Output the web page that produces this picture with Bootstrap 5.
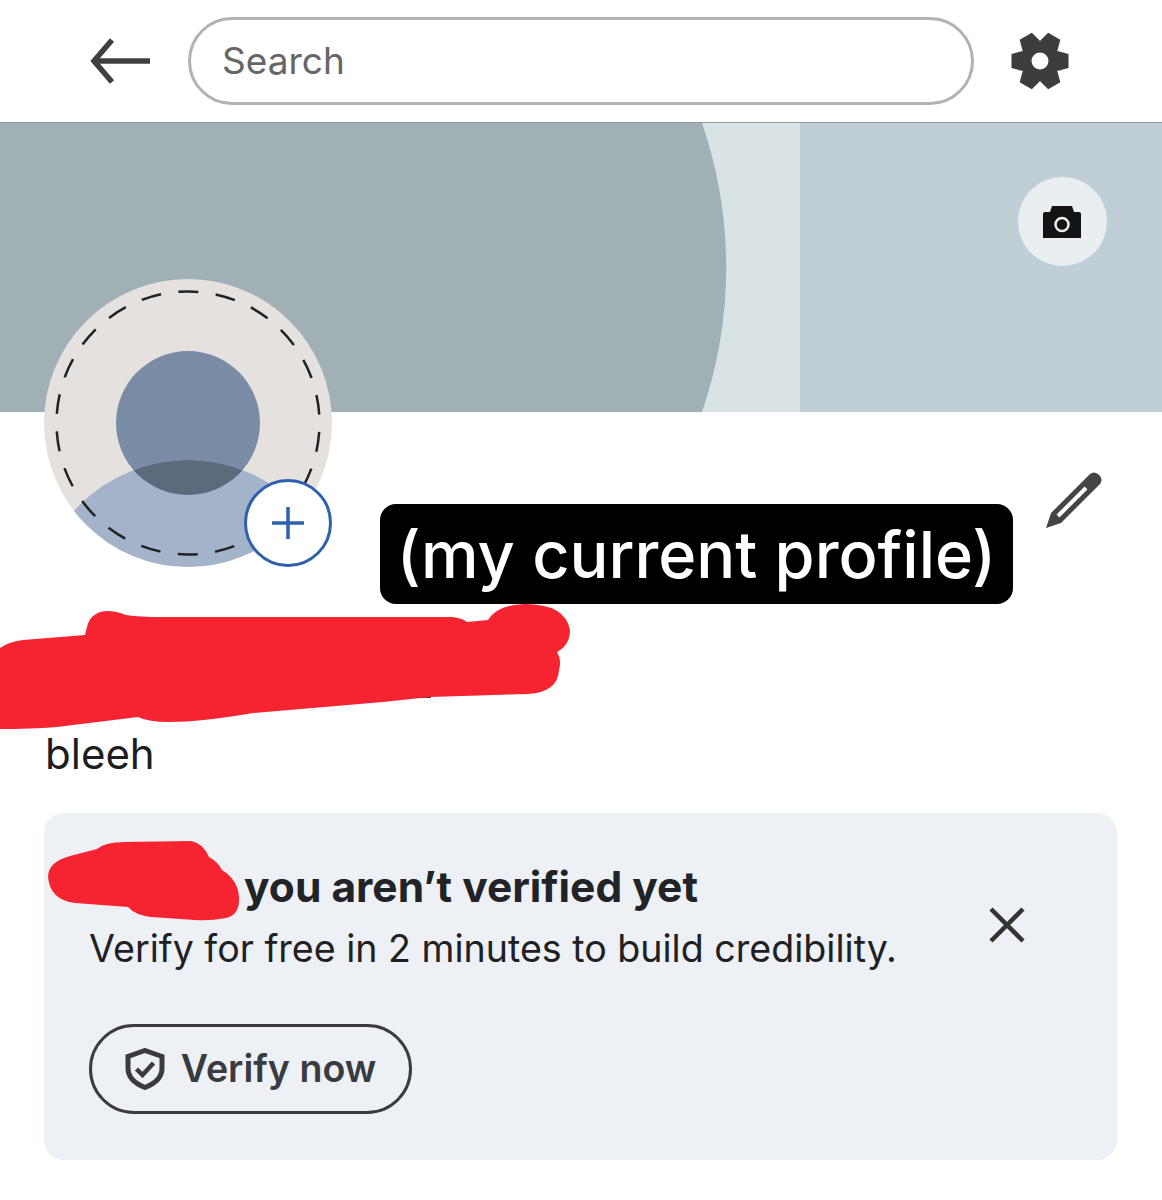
<!DOCTYPE html>
<html lang="en">
<head>
    <meta charset="UTF-8">
    <meta name="viewport" content="width=device-width, initial-scale=1.0">
    <title>Profile</title>
    <link href="https://cdn.jsdelivr.net/npm/bootstrap@5.3.0/dist/css/bootstrap.min.css" rel="stylesheet">
    <style>
        body {
            background-color: #fff;
            font-family: Inter, "Liberation Sans", sans-serif;
            color: #1d1d1f;
        }
        .page-wrap { height: 1200px; overflow: hidden; }
        .top-bar {
            height: 123px;
            padding-left: 90px;
            border-bottom: 1px solid #8f9a9c;
        }
        .search-box {
            width: 786px;
            height: 88px;
            margin-left: 36px;
            margin-right: 36px;
            padding: 0 31px 2px;
            border: 3px solid #b2b2b2;
            font-size: 37px;
        }
        .search-box::placeholder { color: #666; opacity: 1; }
        .banner-wrap { height: 289px; }
        .banner-art { display: block; width: 100%; height: 289px; }
        .camera-btn {
            top: 54px;
            right: 55px;
            width: 89px;
            height: 89px;
            background: #e9eff1;
        }
        .profile-body { padding: 317px 44px 0 45px; }
        .avatar-wrap { left: 44px; top: -133px; width: 288px; height: 288px; }
        .add-photo {
            left: 200px;
            top: 200px;
            width: 88px;
            height: 88px;
            background: #fff;
            border: 3px solid #2e60ac;
        }
        .edit-pencil { left: 1044px; top: 61px; overflow: visible; }
        .note-label {
            left: 380px;
            top: 92px;
            width: 633px;
            height: 100px;
            padding-top: 2px;
            background: #000;
            color: #fff;
            border-radius: 16px;
            font-size: 64.800px;
            font-weight: 500;
        }
        .bio-text { font-size: 42px; line-height: 50px; margin-bottom: 34px; }
        .verify-box {
            position: relative;
            width: 1073px;
            height: 347px;
            margin-left: -1px;
            padding: 49px 45px 0;
            background: #edf1f6;
            border-radius: 20px;
        }
        .verify-title { font-size: 42.500px; font-weight: 700; line-height: 50px; padding-left: 155px; color: #222326; }
        .verify-sub { font-size: 37.600px; line-height: 50px; margin-top: 12px; color: #1f2023; }
        .verify-close { right: 92px; top: 94px; }
        .verify-btn {
            margin-top: 50px;
            width: 323px;
            height: 90px;
            border: 3px solid #3a3b40;
            color: #3a3b40;
            font-size: 37.600px;
            font-weight: 600;
        }
        .scribble { left: 0; top: 0; pointer-events: none; }
    </style>
</head>
<body>
    <div class="page-wrap position-relative">
        <!-- Top bar -->
        <div class="top-bar d-flex align-items-center bg-white">
            <svg width="62" height="48" viewBox="0 0 62 48" fill="none" stroke="#3f3f3f" stroke-width="5.500">
                <path d="M3 24H60"/>
                <path d="M22 3L4 24L22 45"/>
            </svg>
            <input class="form-control rounded-pill search-box shadow-none" type="text" placeholder="Search">
            <svg width="60" height="60" viewBox="-30 -30 60 60">
                <circle r="20" fill="#3d3d3d"/>
                <g fill="#3d3d3d">
                    <polygon points="-10,-17.500 -7,-28.500 7,-28.500 10,-17.500" transform="rotate(30)"/>
                    <polygon points="-10,-17.500 -7,-28.500 7,-28.500 10,-17.500" transform="rotate(90)"/>
                    <polygon points="-10,-17.500 -7,-28.500 7,-28.500 10,-17.500" transform="rotate(150)"/>
                    <polygon points="-10,-17.500 -7,-28.500 7,-28.500 10,-17.500" transform="rotate(210)"/>
                    <polygon points="-10,-17.500 -7,-28.500 7,-28.500 10,-17.500" transform="rotate(270)"/>
                    <polygon points="-10,-17.500 -7,-28.500 7,-28.500 10,-17.500" transform="rotate(330)"/>
                </g>
                <circle r="8.500" fill="#fff"/>
            </svg>
        </div>

        <!-- Cover image -->
        <div class="banner-wrap position-relative">
            <svg class="banner-art" viewBox="0 0 1162 289" preserveAspectRatio="none">
                <rect width="1162" height="289" fill="#c0cfd6"/>
                <rect x="690" width="110" height="289" fill="#d9e3e6"/>
                <path d="M0 0H702A444 444 0 0 1 702 289H0Z" fill="#a0b0b5"/>
            </svg>
            <button class="btn camera-btn position-absolute rounded-circle p-0 border-0 d-flex align-items-center justify-content-center" type="button" aria-label="Edit cover">
                <svg width="40" height="34" viewBox="1 0 40 34">
                    <path d="M1 9Q1 7 3 7H8L10 1H30L32 7H37Q39 7 39 9V33H1Z" fill="#141414"/>
                    <circle cx="20" cy="19.500" r="6.500" fill="none" stroke="#e9eff1" stroke-width="2.500"/>
                </svg>
            </button>
        </div>

        <!-- Profile -->
        <div class="profile-body position-relative">
            <div class="avatar-wrap position-absolute">
                <svg width="288" height="288" viewBox="0 0 288 288">
                    <defs>
                        <clipPath id="avatarClip"><circle cx="144" cy="144" r="144"/></clipPath>
                        <clipPath id="headClip"><circle cx="144" cy="144" r="72"/></clipPath>
                    </defs>
                    <circle cx="144" cy="144" r="144" fill="#e5e1de"/>
                    <circle cx="144" cy="144" r="72" fill="#7a8ca5"/>
                    <circle cx="144" cy="334" r="153" fill="#a3b3c9" clip-path="url(#avatarClip)"/>
                    <circle cx="144" cy="334" r="153" fill="#5a6b7c" clip-path="url(#headClip)"/>
                    <circle cx="144" cy="144" r="131.500" fill="none" stroke="#222" stroke-width="2.500" stroke-dasharray="20 17.550" stroke-dashoffset="-9"/>
                </svg>
                <button class="btn add-photo position-absolute rounded-circle p-0 d-flex align-items-center justify-content-center" type="button" aria-label="Add photo">
                    <svg width="34" height="34" viewBox="0 0 34 34" stroke="#2e60ac" stroke-width="3.500">
                        <path d="M1 17H33M17 1V33"/>
                    </svg>
                </button>
            </div>

            <svg class="edit-pencil position-absolute" width="60" height="60" viewBox="0 0 60 60">
                <path d="M2 55L7 40L46 1Q50 -2 54 1L56 3Q59 7 56 11L17 50Z" fill="#444"/>
                <path d="M14 43L42 15" stroke="#fff" stroke-width="4"/>
            </svg>

            <div class="note-label position-absolute d-flex align-items-center justify-content-center">(my current profile)</div>

            <div class="bio-text">bleeh</div>

            <div class="verify-box">
                <div class="verify-title">you aren’t verified yet</div>
                <div class="verify-sub">Verify for free in 2 minutes to build credibility.</div>
                <svg class="verify-close position-absolute" width="36" height="36" viewBox="0 0 36 36" stroke="#333" stroke-width="4.500">
                    <path d="M2 2L34 34M34 2L2 34"/>
                </svg>
                <button class="btn verify-btn rounded-pill p-0 d-flex align-items-center justify-content-center gap-3" type="button">
                    <svg width="40" height="42" viewBox="0 0 40 42" fill="none" stroke="#3a3b40" stroke-width="5">
                        <path d="M20 2.500L37 8.500V20C37 30 29 36 20 39.500C11 36 3 30 3 20V8.500Z"/>
                        <path d="M11.500 21L17.500 27L28.500 15" stroke-width="4.500"/>
                    </svg>
                    Verify now
                </button>
            </div>
        </div>

        <!-- Red redaction scribbles drawn over the screenshot -->
        <svg class="scribble position-absolute" width="1162" height="1200" viewBox="0 0 1162 1200">
            <rect x="421" y="695" width="10" height="3" fill="#333"/>
            <path fill="#f62430" d="M0 648Q8 642 23 640L85 635Q88 620 92 617Q98 611 107 611Q116 611 126 615Q140 617 161 617L452 617Q462 618 467 622L488 620Q497 605 525 604Q565 604 570 630Q570 645 557 652Q562 660 559 670Q558 692 528 694L430 697L383 702L253 713Q200 722 170 722Q148 722 138 717L57 727Q30 729 0 729Z"/>
            <path fill="#f62430" d="M48 877Q48 862 70 856L97 849Q105 842 125 842L191 841Q203 843 209 857Q218 862 222 870Q238 880 239 897Q240 915 226 918Q210 921 195 920L151 917Q135 915 128 907L75 903Q50 900 48 877Z"/>
        </svg>
    </div>
    <script src="https://cdn.jsdelivr.net/npm/bootstrap@5.3.0/dist/js/bootstrap.bundle.min.js"></script>
</body>
</html>
